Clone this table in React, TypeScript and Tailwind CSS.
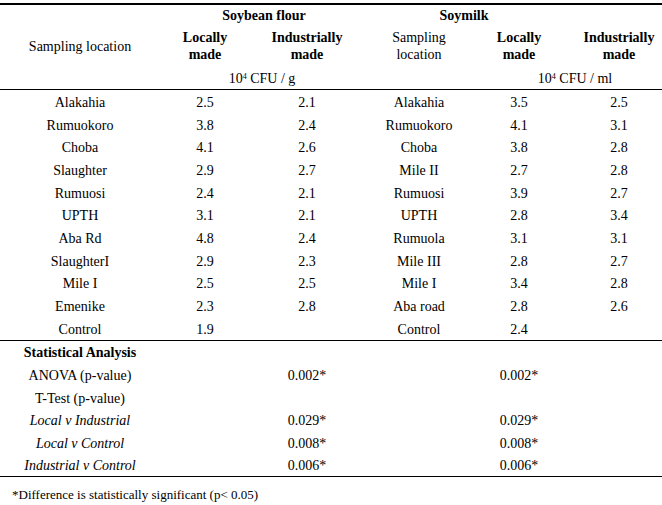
import React from "react";

const cols = "grid grid-cols-[160px_90px_114px_110px_90px_98px]";

const rows: [string, string, string, string, string, string][] = [
  ["Alakahia", "2.5", "2.1", "Alakahia", "3.5", "2.5"],
  ["Rumuokoro", "3.8", "2.4", "Rumuokoro", "4.1", "3.1"],
  ["Choba", "4.1", "2.6", "Choba", "3.8", "2.8"],
  ["Slaughter", "2.9", "2.7", "Mile II", "2.7", "2.8"],
  ["Rumuosi", "2.4", "2.1", "Rumuosi", "3.9", "2.7"],
  ["UPTH", "3.1", "2.1", "UPTH", "2.8", "3.4"],
  ["Aba Rd", "4.8", "2.4", "Rumuola", "3.1", "3.1"],
  ["SlaughterI", "2.9", "2.3", "Mile III", "2.8", "2.7"],
  ["Mile I", "2.5", "2.5", "Mile I", "3.4", "2.8"],
  ["Emenike", "2.3", "2.8", "Aba road", "2.8", "2.6"],
  ["Control", "1.9", "", "Control", "2.4", ""],
];

const stats: { label: string; italic?: boolean; bold?: boolean; a: string; b: string }[] = [
  { label: "Statistical Analysis", bold: true, a: "", b: "" },
  { label: "ANOVA (p-value)", a: "0.002*", b: "0.002*" },
  { label: "T-Test (p-value)", a: "", b: "" },
  { label: "Local v Industrial", italic: true, a: "0.029*", b: "0.029*" },
  { label: "Local v Control", italic: true, a: "0.008*", b: "0.008*" },
  { label: "Industrial v Control", italic: true, a: "0.006*", b: "0.006*" },
];

export default function App() {
  return (
    <div className="w-[662px] h-[505px] bg-white text-black text-[14px] font-['Liberation_Serif','Times_New_Roman',serif] leading-[17px]">
      <div className="h-[3px]" />
      <div className="border-t-2 border-black" />
      {/* Header */}
      <div className={`${cols} h-[21px] items-center font-bold`}>
        <div />
        <div className="col-span-2 text-center pl-[4px]">Soybean flour</div>
        <div className="col-span-2 text-center">Soymilk</div>
        <div />
      </div>
      <div className={`${cols} h-[40px] items-center text-center`}>
        <div>Sampling location</div>
        <div className="font-bold">Locally<br />made</div>
        <div className="font-bold">Industrially<br />made</div>
        <div>Sampling<br />location</div>
        <div className="font-bold">Locally<br />made</div>
        <div className="font-bold pl-[12px]">Industrially<br />made</div>
      </div>
      <div className={`${cols} h-[23px] pt-[2px] items-center text-center`}>
        <div />
        <div className="col-span-2">10<sup className="text-[8px]">4</sup> CFU / g</div>
        <div />
        <div className="col-span-2 pl-[14px]">10<sup className="text-[8px]">4</sup> CFU / ml</div>
      </div>
      <div className="border-t-[1.5px] border-black" />
      <div className="flex flex-col">
        {rows.map((r, i) => (
          <div key={i} className={`${cols} h-[22.7px] pt-[2px] items-center text-center`}>
            <div>{r[0]}</div>
            <div>{r[1]}</div>
            <div>{r[2]}</div>
            <div>{r[3]}</div>
            <div>{r[4]}</div>
            <div className="pl-[12px]">{r[5]}</div>
          </div>
        ))}
      </div>
      <div className="border-t-[1.5px] border-black" />
      <div className="flex flex-col">
        {stats.map((s, i) => (
          <div key={i} className={`${cols} h-[22.6px] pt-[2px] items-center text-center`}>
            <div className={s.bold ? "font-bold" : s.italic ? "italic" : ""}>{s.label}</div>
            <div />
            <div>{s.a}</div>
            <div />
            <div>{s.b}</div>
            <div />
          </div>
        ))}
      </div>
      <div className="border-t-[1.5px] border-black" />
      <div className="pl-[12px] pt-[9px] text-[13px]">*Difference is statistically significant (p&lt; 0.05)</div>
    </div>
  );
}
